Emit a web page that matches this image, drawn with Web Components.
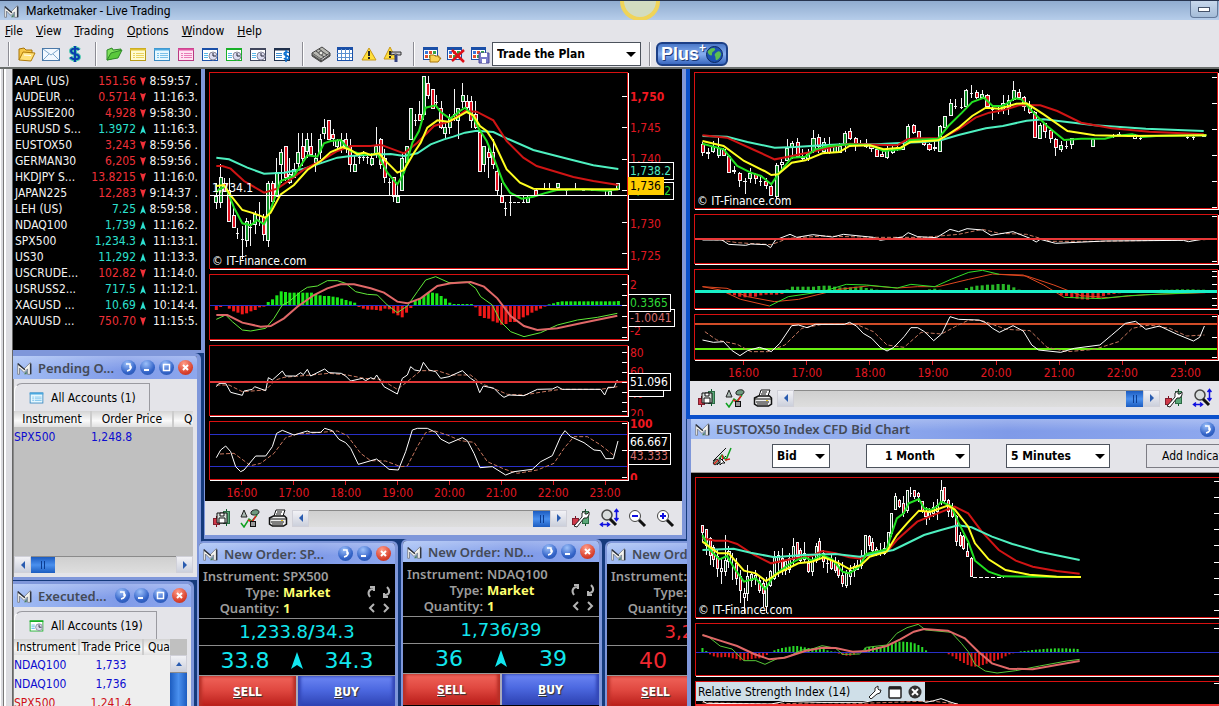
<!DOCTYPE html>
<html lang="en">
<head>
<meta charset="utf-8">
<title>Marketmaker - Live Trading</title>
<style>
	:root {
		--ui: "DejaVu Sans Condensed", "DejaVu Sans", sans-serif;
		--chrome: #e4e4e9;
		--edge: #7f97da;
		--red: #e01822;
		--cyan: #2ce0d0;
	}
	html, body { height: 100%; }
	body {
		margin: 0;
		overflow: hidden;
		font: 12px/16px var(--ui);
		color: #000;
	}
</style>
</head>
<body>
<mm-app></mm-app>

<script>
/* ============================================================
   Shared bits
   ============================================================ */

const RESET = `
	*, *::before, *::after { box-sizing: border-box; }
	button, select { font: inherit; color: inherit; margin: 0; padding: 0; border: 0; background: none; border-radius: 0; }
	svg { display: block; }
`;

function shadow(el, css, html) {
	const root = el.attachShadow({ mode: "open" });
	root.innerHTML = `<style>${RESET}${css}</style>${html}`;
	return root;
}

/* ============================================================
   <mm-icon name="..."> : 20x20 toolbar icons
   ============================================================ */

const sheet = (line, head, fill) => `
	<rect x="2.5" y="4.5" width="15" height="12" fill="${fill}" stroke="${line}"/>
	<path d="M2 5.5h16" stroke="${head}" stroke-width="2"/>
	<path d="M5 9.5h2M8 9.5h8M5 11.5h2M8 11.5h8M5 13.5h2M8 13.5h8" stroke="${head}" opacity=".7"/>`;
const clockSheet = (c) => `
	<rect x="2.5" y="4.5" width="15" height="12" fill="#fff" stroke="${c}"/>
	<path d="M2 5h16" stroke="${c}" stroke-width="2"/>
	<path d="M4 9.5h4M4 11.5h4M4 13.5h4" stroke="#5bb8e8"/>
	<circle cx="13" cy="12" r="4" fill="#dcdcf0" stroke="#889"/><path d="M13 9v3h3" fill="none" stroke="#223"/>`;
const layoutGrid = `
	<rect x="1.5" y="3.5" width="14" height="12" fill="#fff" stroke="#1a4fa8"/>
	<path d="M1 4.5h15" stroke="#1a4fa8" stroke-width="3"/>
	<path d="M3 7h3v3h-3zM11 11h3v3h-3z" fill="#3a78d8"/><path d="M7 7h3v3h-3zM3 11h3v3h-3z" fill="#e05030"/><path d="M11 7h3v3h-3zM7 11h3v3h-3z" fill="#38a048"/>`;
const candles = `
	<path d="M14.5 1v17" stroke="#0a5a2a"/><rect x="11.5" y="3.5" width="6" height="12" fill="#5aa878" stroke="#2c6a44"/>
	<path d="M4.5 8v11" stroke="#7a1020"/><rect x="1.5" y="10.5" width="6" height="6" fill="#d03848" stroke="#802030"/>`;

const ICONS = {
	logo: `<path d="M3 17V6l7 5 7-7v13h-3v-6l-4 4-5-5v7z" fill="#f3f3ee" stroke="#7a808c"/><path d="M3 5l8 7M17.500 5v12" stroke="#2b2f38" stroke-width="1.500" fill="none"/><path d="M10 17l3-4v4z" fill="#4d7d55"/>`,
	open: `<path d="M2 16V5l5-1 2 2h6v3" fill="#f7c94a" stroke="#a87408"/><path d="M2 16l4-8 12 1-4 8z" fill="#ffe27a" stroke="#b07a08"/><path d="M7 11l7 .5" stroke="#fff"/>`,
	mail: `<rect x="1.5" y="4.5" width="17" height="12" fill="#f2f8ff" stroke="#4a78a8"/><path d="M2 5l8 6 8-6M2 16l6-6M18 16l-6-6" fill="none" stroke="#7fa8cc"/>`,
	dollar: `<path d="M10 2v16M14 6c-1-2-8-2-8 1 0 4 8 2 8 6 0 3-7 3-8.5 0" fill="none" stroke="#50c8b0" stroke-width="4"/><path d="M10 2v16M14 6c-1-2-8-2-8 1 0 4 8 2 8 6 0 3-7 3-8.5 0" fill="none" stroke="#0a3fae" stroke-width="2"/>`,
	leaf: `<path d="M3 16V6l5-2 1 2 8-1-3 8z" fill="#7fe05c" stroke="#2f8a28"/><path d="M3 16l4-7 11-3-4 8z" fill="#5ac83c" stroke="#2f8a28"/>`,
	yellow: sheet("#b89b18", "#e0c030", "#fffbd0"),
	blue: sheet("#3888c0", "#4aa8e0", "#e6f8ff"),
	pink: sheet("#b83880", "#e050a0", "#ffe4f2"),
	clockBlue: clockSheet("#1a4fa8"),
	clockGreen: clockSheet("#18b028"),
	clockGrey: clockSheet("#40465c"),
	sheetDollar: `<rect x="2.5" y="4.5" width="15" height="12" fill="#fff" stroke="#20304c"/><path d="M2 5.5h16" stroke="#20304c" stroke-width="2"/><path d="M4 9.5h6M4 11.5h6M4 13.5h6" stroke="#4090d0"/><path d="M14 6v12M17 9c-1-2-5-1-5 1 0 2 5 1 5 4 0 2-4 2-5 0" fill="none" stroke="#0a70d0" stroke-width="1.5"/>`,
	cash: `<path d="M1 9l10-6 8 6-9 6z" fill="#b8b8b2" stroke="#444"/><path d="M1 9v3l9 6v-3M10 18l9-6v-3" fill="#8c8c88" stroke="#444"/><path d="M1 11l9 6 9-6M5 7l8 6M8 5l8 6" fill="none" stroke="#444"/><circle cx="10" cy="9" r="2" fill="#e8e8e2" stroke="#555"/>`,
	table: `<rect x="2.5" y="3.5" width="15" height="13" fill="#fff" stroke="#1a4fa8"/><path d="M2 4.5h16" stroke="#1a4fa8" stroke-width="3"/><path d="M2 9.5h15M2 13.5h15M6.5 5v11M10.5 5v11M14.5 5v11" stroke="#5a90d0"/>`,
	warn: `<path d="M10 4l7 12H3z" fill="#ffdf3a" stroke="#c8981a"/><path d="M10 7v5M10 13v2" stroke="#222" stroke-width="2"/>`,
	warnTool: `<path d="M7 3l6 12H1z" fill="#ffdf3a" stroke="#c8981a"/><path d="M7 7v4M7 12v2" stroke="#222" stroke-width="2"/><path d="M8 8h10v3h-3l-2-1-5 1z" fill="#c8c8d0" stroke="#333"/><path d="M13 11v7" stroke="#334080" stroke-width="3"/>`,
	layoutOpen: layoutGrid + `<path d="M8 18v-7h4l1 1h4v2l2 0-3 4z" fill="#f9d255" stroke="#a87408"/>`,
	layoutDelete: layoutGrid + `<path d="M6 6l12 12M18 6L6 17" stroke="#e01018" stroke-width="2.500"/>`,
	layoutSave: layoutGrid + `<path d="M9 9h10v10H9z" fill="#7a7ac8" stroke="#4a4a9a"/><path d="M11 9h6v4h-6zM12 15h4v4h-4z" fill="#fff"/>`,
	chartSave: candles + `<path d="M5 5h10v10H5z" fill="#d8e0dc" stroke="#111"/><path d="M8 5h4v3H8zM7 10h6v5H7z" fill="#fff" stroke="#111"/>`,
	shapes: `<path d="M4 2l3 7H1z" fill="#aab8b2" stroke="#222"/><path d="M11 4c2-3 8-3 8 0s-6 4-8 2z" fill="#6f9a80" stroke="#222"/><path d="M1 15l3 4 5-8 3 2 5-6" fill="none" stroke="#10a020" stroke-width="1.5"/><path d="M8 12l4 2 4-6" fill="none" stroke="#e02020" stroke-width="1.5"/><rect x="10.5" y="13.5" width="5" height="5" fill="#999" stroke="#111"/>`,
	print: `<path d="M6 8l2-6h9l-2 6" fill="#fff" stroke="#111"/><path d="M9 4h5M8 6h5" stroke="#111"/><path d="M1.5 10l4-2h11l2 2v6l-3 2h-11l-3-2z" fill="#eee" stroke="#111" stroke-width="1.5"/><path d="M2 11h16M3 14h13M4 16h11" stroke="#111"/><path d="M13 12.5h2" stroke="#e0c020"/>`,
	chartTool: candles + `<path d="M3 18l8-9V5l3-2v3h2l2-2v3l-2 3h-3L6 19z" fill="#fff" stroke="#222"/>`,
	fit: `<circle cx="8" cy="7" r="5" fill="#d8dcdc" stroke="#444" stroke-width="1.5"/><path d="M11 11l6 6" stroke="#111" stroke-width="3"/><path d="M17.5 2v10M15.5 4l2-2.5 2 2.5M15.5 10l2 2.5 2-2.5M2 16.5h8M4 14.5l-2.5 2 2.5 2M8 14.5l2.5 2-2.5 2" fill="none" stroke="#1010e0" stroke-width="1.5"/>`,
	zoomOut: `<circle cx="8" cy="8" r="5.5" fill="#fff" stroke="#444"/><path d="M5 8h6" stroke="#1010e0" stroke-width="2"/><path d="M12 12l6 6" stroke="#111" stroke-width="3"/>`,
	zoomIn: `<circle cx="8" cy="8" r="5.5" fill="#fff" stroke="#444"/><path d="M5 8h6M8 5v6" stroke="#1010e0" stroke-width="2"/><path d="M12 12l6 6" stroke="#111" stroke-width="3"/>`,
	draw: `<path d="M1 15L14 2M5 19l9-9" stroke="#111"/><ellipse cx="4" cy="16" rx="3" ry="2" fill="#8ad0a0" stroke="#222" transform="rotate(-45 4 16)"/><path d="M7 13l3-4 4 5 5-12" fill="none" stroke="#10a020" stroke-width="1.5"/><path d="M10 9l1 4M13 14l5-1M2 18l4-4" stroke="#e02020" stroke-width="1.5"/><path d="M8 12v7l2-2h3z" fill="#fff" stroke="#111"/>`,
};

class MmIcon extends HTMLElement {
	connectedCallback() {
		if (this.shadowRoot) return;
		shadow(this, `
			:host { display: inline-block; width: 20px; height: 20px; flex: none; }
			svg { width: 100%; height: 100%; }
		`, `<svg viewBox="0 0 20 20" aria-hidden="true" fill="none">${ICONS[this.getAttribute("name")] || ""}</svg>`);
	}
}
customElements.define("mm-icon", MmIcon);

/* ============================================================
   <mm-select label="..." value="..."> : drop-down with black arrow
   ============================================================ */

class MmSelect extends HTMLElement {
	connectedCallback() {
		shadow(this, `
			:host { display: block; position: relative; flex: none; width: var(--w, 104px); height: 24px; }
			select {
				appearance: none; width: 100%; height: 100%; padding: 0 20px 0 4px;
				background: #fff; border: 1px solid #4c525c; font-weight: bold;
				text-align-last: var(--align, left);
			}
			i {
				position: absolute; right: 5px; top: 10px; pointer-events: none;
				border: 5px solid transparent; border-top-color: #000; border-bottom: 0;
			}
		`, `<select aria-label="${this.getAttribute("label")}"><option>${this.getAttribute("value")}</option></select><i></i>`);
	}
}
customElements.define("mm-select", MmSelect);

/* ============================================================
   Application frame: title, menu, toolbar
   ============================================================ */

class MmTitleBar extends HTMLElement {
	connectedCallback() {
		shadow(this, `
			:host {
				display: flex; align-items: center; gap: 6px; position: relative; overflow: hidden;
				height: 20px; padding: 0 1px 0 2px; flex: none;
				border-top: 1px solid #27344f;
				background: linear-gradient(#90acd0, #b6cdea);
			}
			h1 { flex: 1; margin: 0; font: 12px/18px Roboto, sans-serif; }
			.sun {
				position: absolute; left: 50%; top: -20px; width: 40px; height: 40px; margin-left: 10px;
				border-radius: 50%; border: 4px solid #f0d458; background: #d2dcc0;
			}
			button {
				align-self: flex-start; width: 28px; height: 17px; display: grid; place-items: center;
				border: 1px solid #63799a; border-top: 0; border-radius: 0 0 4px 4px;
				background: linear-gradient(#c8d8ec, #a4bcd8);
			}
			button i { width: 12px; height: 5px; background: #fff; border: 1px solid #44526a; }
			mm-icon { width: 18px; height: 18px; }
		`, `<mm-icon name="logo"></mm-icon><h1>Marketmaker - Live Trading</h1><span class="sun"></span>
			<button aria-label="Minimize"><i></i></button>`);
	}
}
customElements.define("mm-title-bar", MmTitleBar);

class MmMenuBar extends HTMLElement {
	connectedCallback() {
		const items = ["File", "View", "Trading", "Options", "Window", "Help"];
		shadow(this, `
			:host { display: flex; gap: 13px; height: 21px; padding: 0 5px; background: var(--chrome); flex: none; align-items: center; }
		`, items.map((t) => `<button><u>${t[0]}</u>${t.slice(1)}</button>`).join(""));
	}
}
customElements.define("mm-menu-bar", MmMenuBar);

class MmToolbar extends HTMLElement {
	connectedCallback() {
		const groups = [
			["open", "mail", "dollar"],
			["leaf", "yellow", "blue", "pink", "clockBlue", "clockGreen", "clockGrey", "sheetDollar"],
			["cash", "table", "warn", "warnTool"],
			["layoutOpen", "layoutDelete", "layoutSave"],
		];
		const html = groups.map((g) => `<hr>` + g.map((n) =>
			`<button aria-label="${n}"><mm-icon name="${n}"></mm-icon></button>`).join("")).join("");
		shadow(this, `
			:host {
				display: flex; align-items: center; height: 28px; flex: none;
				background: var(--chrome); border-bottom: 2px solid #6a6e6c;
			}
			hr { width: 2px; height: 24px; margin: 0 5px 0 8px; border: 0; border-left: 1px solid #8c8c94; border-right: 1px solid #fff; }
			button { width: 24px; height: 24px; display: grid; place-items: center; flex: none; }
			mm-select { --w: 149px; }
			.plus {
				width: 72px; border-radius: 6px; border: 2px solid #1c3f86; display: flex; align-items: center; justify-content: center;
				background: linear-gradient(#4a78c8, #86aef0 50%, #3a68c0);
				font: bold 18px/20px "Liberation Sans", sans-serif; color: #fff; text-shadow: 1px 1px 0 #1c3a78;
			}
			.plus sup { font-size: 12px; line-height: 8px; align-self: flex-start; }
		`, `${html}<mm-select label="Layout" value="Trade the Plan"></mm-select><hr>
			<button class="plus">Plus<sup>+</sup>
				<svg width="17" height="17" viewBox="0 0 17 17"><circle cx="8.500" cy="8.500" r="8" fill="#1c50b0" stroke="#0c2860"/>
				<path d="M4 3c3-2 6-1 5 1s-3 1-3 4-3 1-4-1 1-3 2-4zM11 6c2-2 4 0 4 2s-2 5-4 6-1-3-2-4 0-3 2-4z" fill="#5cc050"/></svg></button>`);
	}
}
customElements.define("mm-toolbar", MmToolbar);

/* ============================================================
   <mm-scroll> : scrollbar, horizontal unless [vertical]
   --at is the free share of track before the thumb
   ============================================================ */

class MmScroll extends HTMLElement {
	connectedCallback() {
		const v = this.hasAttribute("vertical");
		const arrow = (d) => `<button aria-label="Scroll"><svg width="8" height="8" viewBox="0 0 8 8"><path d="${d}" fill="#2a5cb0"/></svg></button>`;
		shadow(this, `
			:host { display: flex; flex-direction: ${v ? "column" : "row"}; flex: none; height: 17px; background: #d8d8d8; }
			:host([vertical]) { width: 17px; height: auto; }
			button { width: 17px; height: 17px; flex: none; display: grid; place-items: center; background: linear-gradient(#f2f2f6, #ccd0dc); border: 1px solid #d0d0d8; }
			.track { flex: 1; display: flex; flex-direction: inherit; border: 0 solid #8a8a8a; border-top-width: 1px; background: linear-gradient(#cfcfcf, #dedede); }
			.before { flex: var(--at, 1) 0 0px; }
			.after { flex: calc(1 - var(--at, 1)) 0 0px; }
			.thumb { flex: 0 0 var(--thumb, 17px); display: grid; place-items: center; background: linear-gradient(${v ? "90deg," : ""}#1c5cc0, #4a90ee 50%, #1c5cc0); }
			.thumb i { width: 4px; height: 8px; border: 0 solid #0c3c90; border-width: 0 1px; }
		`, `${arrow(v ? "M4 2l3 4H1z" : "M6 0v8L2 4z")}
			<div class="track"><span class="before"></span><span class="thumb"><i></i></span><span class="after"></span></div>
			${arrow(v ? "M4 6l3-4H1z" : "M2 0v8l4-4z")}`);
	}
}
customElements.define("mm-scroll", MmScroll);

/* ============================================================
   <mm-window heading="..." controls="detach min max close">
   A free window on the desktop. Placed with --x / --y.
   ============================================================ */

const CONTROLS = {
	detach: `<path d="M5 4h4v4M9 5c2 2 1 5-3 6" fill="none" stroke="#fff" stroke-width="1.5"/>`,
	min: `<path d="M4 10h5" stroke="#fff" stroke-width="2"/>`,
	max: `<rect x="4.5" y="4.5" width="6" height="6" fill="none" stroke="#fff" stroke-width="1.5"/>`,
	close: `<path d="M5 5l5 5M10 5l-5 5" stroke="#fff" stroke-width="2"/>`,
};

class MmWindow extends HTMLElement {
	connectedCallback() {
		const heading = this.getAttribute("heading");
		const controls = (this.getAttribute("controls") || "").split(" ").filter(Boolean);
		const bar = heading ? `<header><mm-icon name="logo"></mm-icon><h2>${heading}</h2>${controls.map((c) =>
			`<button class="${c}" aria-label="${c}"><svg width="15" height="15" viewBox="0 0 15 15">${CONTROLS[c]}</svg></button>`).join("")}</header>` : "";
		shadow(this, `
			:host {
				position: absolute; left: var(--x); top: var(--y);
				display: flex; flex-direction: column; overflow: hidden;
				border: 0 solid var(--edge); background: #000;
			}
			header {
				display: flex; align-items: center; gap: 4px; flex: none;
				height: var(--bar, 23px); padding: 0 4px 0 2px;
				background: linear-gradient(rgba(255,255,255,.25), transparent 60%), linear-gradient(90deg, #a2bdf4, #7f9ae8 60%, #8ea8ee);
			}
			h2 {
				flex: 1; min-width: 0; margin: 0 0 0 1px; overflow: hidden; white-space: nowrap;
				font: 600 13px/20px "Noto Sans", sans-serif; color: #444a56;
			}
			mm-icon { width: 18px; height: 18px; }
			header button {
				width: 15px; height: 15px; flex: none; border-radius: 50%;
				background: radial-gradient(circle at 40% 25%, #9cc0fa, #3464c8 60%, #2450a8);
			}
			header .close { background: radial-gradient(circle at 40% 25%, #ff9c88, #d8402c 65%, #b02c20); }
		`, `${bar}<slot></slot>`);
	}
}
customElements.define("mm-window", MmWindow);

/* ============================================================
   <mm-quotes> : price watch list
   ============================================================ */

const QUOTES = [
	["AAPL (US)", "151.56", -1, "8:59:57 ."],
	["AUDEUR ...", "0.5714", -1, "11:16:3."],
	["AUSSIE200", "4,928", -1, "9:58:30 ."],
	["EURUSD S...", "1.3972", 1, "11:16:3."],
	["EUSTOX50", "3,243", -1, "8:59:56 ."],
	["GERMAN30", "6,205", -1, "8:59:56 ."],
	["HKDJPY S...", "13.8215", -1, "11:16:0."],
	["JAPAN225", "12,283", -1, "9:14:37 ."],
	["LEH (US)", "7.25", 1, "8:59:58 ."],
	["NDAQ100", "1,739", 1, "11:16:2."],
	["SPX500", "1,234.3", 1, "11:13:1."],
	["US30", "11,292", 1, "11:13:3."],
	["USCRUDE...", "102.82", -1, "11:14:0."],
	["USRUSS2...", "717.5", 1, "11:12:1."],
	["XAGUSD ...", "10.69", 1, "10:14:4."],
	["XAUUSD ...", "750.70", -1, "11:15:5."],
];

class MmQuotes extends HTMLElement {
	connectedCallback() {
		const rows = QUOTES.map(([name, price, dir, time]) => `<tr class="${dir > 0 ? "up" : "down"}">
			<th scope="row">${name}</th><td class="price">${price}</td>
			<td><svg width="6" height="9" viewBox="0 0 6 9"><path d="${dir > 0 ? "M3 0l3 9-3-2-3 2z" : "M0 0l3 1 3-1-3 9z"}" fill="currentColor"/></svg></td>
			<td class="time">${time}</td></tr>`).join("");
		shadow(this, `
			:host { display: block; flex: 1; padding: 4px 3px 0 2px; background: #000; color: #f4f4f4; }
			table { width: 100%; table-layout: fixed; border-collapse: collapse; }
			th, td { padding: 0; height: 16px; line-height: 16px; font-weight: normal; text-align: left; white-space: nowrap; }
			col.name { width: 68px; }
			col.price { width: 53px; }
			col.dir { width: 11px; }
			.price, .time { text-align: right; }
			.up { color: var(--cyan); }
			.down { color: #f03038; }
			th, .time { color: #f4f4f4; }
			svg { margin: 0 auto 0 4px; }
		`, `<table aria-label="Quotes"><colgroup><col class="name"><col class="price"><col class="dir"><col></colgroup>${rows}</table>`);
	}
}
customElements.define("mm-quotes", MmQuotes);

/* ============================================================
   <mm-orders list="pending|executed"> : tab and order table
   ============================================================ */

const ORDERS = {
	pending: {
		tab: "All Accounts (1)", icon: "blue", cols: [77, 82, 60],
		head: ["Instrument", "Order Price", "Q"],
		rows: [["buy", "SPX500", "1,248.8"]],
	},
	executed: {
		tab: "All Accounts (19)", icon: "clockGreen", cols: [65, 64, 60],
		head: ["Instrument", "Trade Price", "Qua"],
		rows: [["buy", "NDAQ100", "1,733"], ["buy", "NDAQ100", "1,736"], ["sell", "SPX500", "1,241.4"]],
	},
};

class MmOrders extends HTMLElement {
	connectedCallback() {
		const list = this.getAttribute("list");
		const o = ORDERS[list];
		shadow(this, `
			:host { display: flex; flex-direction: column; flex: 1; min-height: 0; padding-right: 4px; background: var(--chrome); border-left: 1px solid #888; }
			.tab {
				align-self: flex-start; flex: none; display: flex; align-items: center; gap: 6px;
				height: 28px; margin-top: 4px; padding: 0 13px;
				border: 1px solid #9a9aa0; border-bottom: 0; border-left-color: #fff; border-radius: 8px 0 0 0;
			}
			.tab mm-icon { width: 17px; height: 17px; }
			.body { flex: 1; display: flex; min-height: 0; background: #c0c0c0; overflow: hidden; }
			.view { flex: 1; min-width: 0; overflow: hidden; }
			table { table-layout: fixed; border-collapse: collapse; width: ${o.cols.reduce((a, b) => a + b)}px; }
			th { height: 16px; padding: 0; font-weight: normal; background: linear-gradient(#d4d4d4, #fafafa 60%, #e0e0e0); border-right: 2px solid #ccc; white-space: nowrap; }
			th:last-child { text-align: left; padding-left: ${list === "pending" ? 10 : 4}px; }
			td { padding: 0; height: 19px; }
			.executed td + td { text-align: center; }
			.buy { color: #0c0cd0; }
			.sell { color: #d01018; }
			.executed { background: #eee; }
			.foot { flex: none; margin-bottom: 4px; --thumb: 24px; --at: 0; }
			.side { --thumb: 90px; --at: 0; margin-top: 16px; }
		`, `
			<button class="tab"><mm-icon name="${o.icon}"></mm-icon>${o.tab}</button>
			<div class="body">
				<div class="view ${list}"><table>
					<colgroup>${o.cols.map((w) => `<col style="width:${w}px">`).join("")}</colgroup>
					<tr>${o.head.map((h) => `<th scope="col">${h}</th>`).join("")}</tr>
					${o.rows.map(([side, name, price]) => `<tr class="${side}"><td>${name}</td><td>${price}</td><td></td></tr>`).join("")}
				</table></div>
				${list === "executed" ? `<mm-scroll class="side" vertical></mm-scroll>` : ""}
			</div>
			${list === "pending" ? `<mm-scroll class="foot"></mm-scroll>` : ""}`);
	}
}
customElements.define("mm-orders", MmOrders);

/* ============================================================
   <mm-ticket> : order ticket
   ============================================================ */

class MmTicket extends HTMLElement {
	connectedCallback() {
		const at = (n) => this.getAttribute(n) || "";
		const [whole, tick] = at("price").split("/");
		shadow(this, `
			:host { display: block; background: #000; --tone: #12e6ee; }
			:host([falling]) { --tone: #f02830; }
			.info { display: flex; padding: 4px 2px 2px; height: 54px; color: #9c9c9c; }
			dl { flex: 1; margin: 0; display: grid; grid-template-columns: 78px 1fr; column-gap: 4px; grid-auto-rows: 16px; font: 600 13px/16px "Noto Sans", sans-serif; white-space: nowrap; }
			dt { text-align: right; }
			dd { margin: 0; }
			dd.set { color: #ffff70; font-weight: bold; }
			.steps { display: grid; grid-template: 16px 16px / 14px 14px; align-self: end; }
			.steps button { display: grid; place-items: center; }
			.price, .legs { border-top: 1px solid #8c8c8c; color: var(--tone); display: grid; align-items: center; font-family: "DejaVu Sans", sans-serif; }
			.price { height: 27px; font-size: 18px; text-align: center; }
			.legs { height: 30px; grid-template-columns: 1fr 12px 1fr; font-size: 22px; line-height: 28px; text-align: center; }
			.deal { display: grid; grid-template-columns: 1fr 1fr; gap: 2px; border-top: 1px solid #999; background: #aab; }
			.deal button { height: 31px; color: #fff; font-weight: bold; text-shadow: 1px 1px 1px #333; }
			.sell { background: linear-gradient(#f0645a, #e04840 45%, #b81c18); box-shadow: inset 3px 0 3px #b83028, inset -3px 0 3px #b83028; }
			.buy { background: linear-gradient(#6c86f4, #4c68e0 45%, #2c40b0); box-shadow: inset 3px 0 3px #3448b8, inset -3px 0 3px #3448b8; }
		`, `
			<div class="info">
				<dl><dt>Instrument:</dt><dd>${at("instrument")}</dd><dt>Type:</dt><dd class="set">Market</dd><dt>Quantity:</dt><dd class="set">1</dd></dl>
				<div class="steps">${["M4 11C1 7 3 3 7 3M4 1h4v4", "M7 1C11 5 9 9 5 9M4 7v4h4", "M8 2L4 6l4 4", "M4 2l4 4-4 4"].map((d) =>
					`<button aria-label="Change"><svg width="12" height="12" viewBox="0 0 12 12"><path d="${d}" fill="none" stroke="#b4b4b4" stroke-width="2"/></svg></button>`).join("")}</div>
			</div>
			<div class="price"><span>${whole}<b>/</b>${tick}</span></div>
			<div class="legs"><span>${at("bid")}</span><svg width="12" height="17" viewBox="0 0 12 17"><path d="M6 0l6 17-6-4-6 4z" fill="currentColor"/></svg><span>${at("ask")}</span></div>
			<div class="deal"><button class="sell"><u>S</u>ELL</button><button class="buy"><u>B</u>UY</button></div>`);
	}
}
customElements.define("mm-ticket", MmTicket);

/* ============================================================
   Chart data
   ------------------------------------------------------------
   view    x, y, w, h of the panel in plot units (3 per pixel)
   candles i high top bottom low dir, separated by ";"
   lines   colour, width, points "x,y x,y", dashed
   bars    zero line, then [start, values...] above (+) / below (-)
   ============================================================ */

const G = "#22e022", Y = "#ffff20", R = "#d01414", C = "#4ef0c0", W = "#fff", P = "#e06868", D = "#c87860";

const CHARTS = {
	ndaq: {
		x0: 37, step: 12.97, body: 9, times: true,
		panels: [
			{
				height: 197, view: [18, 21, 1251, 585], mark: true,
				level: [388, "1,734.1"],
				ticks: [90, 183, 280, 373, 468, 562],
				candles: `0 350 390 410 428 g;1 293 335 410 425 g;2 335 352 375 375 r;3 335 372 467 467 r;4 420 447 485 485 r;5 485 503 503 520 w;6 480 521 521 580 w;7 455 465 523 543 g;8 462 483 483 540 w;9 435 445 475 505 g;10 408 465 465 480 w;11 445 453 505 525 r;12 345 352 523 543 g;13 345 352 405 405 r;14 275 318 390 390 g;15 250 260 295 350 g;16 240 240 335 345 r;17 275 325 350 355 g;18 290 310 335 335 g;19 200 260 293 310 g;20 200 240 278 300 r;21 200 220 255 275 g;22 200 240 265 265 r;23 262 278 290 318 g;24 205 220 260 280 g;25 160 185 203 220 g;26 163 163 220 220 r;27 190 205 218 240 r;28 220 222 240 250 g;29 200 222 243 262 g;30 200 220 240 262 r;31 220 240 295 318 r;32 270 295 315 318 g;33 262 275 275 295 w;34 255 275 275 285 w;35 262 275 275 295 w;36 262 278 295 300 g;37 183 240 262 275 g;38 215 220 295 310 r;39 250 278 335 350 r;40 335 350 350 390 w;41 335 335 390 408 r;42 350 390 408 410 g;43 262 278 372 372 g;44 240 240 290 300 g;45 127 127 220 222 g;46 145 163 163 180 w;47 105 145 163 165 r;48 31 31 145 163 g;49 30 52 88 100 r;50 70 70 127 130 r;51 87 108 108 125 w;52 105 127 185 188 r;53 165 185 203 220 g;54 145 155 185 203 g;55 68 145 145 165 w;56 125 127 163 220 g;57 50 88 105 125 g;58 88 105 125 140 r;59 90 105 163 185 r;60 105 145 185 190 r;61 200 200 317 317 r;62 240 240 295 317 g;63 240 258 275 335 r;64 220 260 295 310 r;65 310 317 373 390 r;66 350 390 408 410 r;67 408 428 428 450 w;68 390 408 408 450 w;69 408 408 408 408 w;70 408 408 408 408 w;71 390 408 408 408 w;72 390 393 408 408 g;74 370 373 388 388 r;76 350 370 370 370 w;77 350 370 370 370 w;79 352 352 365 370 g;81 370 373 373 390 w;83 350 370 370 372 w;85 372 372 372 372 w;87 372 372 372 372 w;90 372 372 372 390 w;91 373 375 388 390 g;93 350 352 370 372 g`,
				lines: [
					[C, 2, "37,275 75,280 130,305 180,323 240,320 300,308 340,295 400,275 440,270 500,266 560,264 600,270 640,262 680,235 720,220 748,212 783,200 818,194 868,198 908,217 988,252 1058,270 1108,283 1168,298 1243,309"],
					[R, 2, "37,300 55,300 80,308 120,345 180,380 220,368 260,340 300,310 350,285 400,255 440,240 500,240 530,236 600,262 640,230 690,180 740,165 783,135 818,137 868,163 908,225 958,275 998,300 1048,315 1108,333 1168,345 1243,357"],
					[G, 2, "37,380 45,370 65,362 90,425 115,472 140,478 160,462 180,475 200,430 230,345 270,330 310,268 340,272 360,232 380,225 410,222 440,255 470,264 500,266 520,262 550,320 580,355 600,320 625,230 645,195 665,125 695,118 710,138 738,158 768,135 783,125 803,145 823,185 848,225 873,285 898,350 918,380 953,398 988,392 1028,380 1058,372 1138,370 1208,374 1243,370"],
					[Y, 2, "37,360 60,357 80,388 115,432 150,442 183,455 200,440 230,385 270,357 310,312 350,285 380,258 415,243 440,252 460,265 480,260 500,267 525,262 550,290 580,320 600,312 630,260 650,230 670,185 700,163 733,167 758,155 788,138 808,148 828,180 848,195 868,225 908,310 948,350 988,368 1058,370 1243,370"],
				],
				axis: [["1,750", 95, "b"], ["1,745", 188], ["1,740", 280], ["1,730", 473], ["1,725", 566],
					["1,735.2", 370, "tag green"], ["1,738.2", 313, "tag cyan"], ["1,736", 356, "tag now"]],
			},
			{
				height: 66, view: [18, 15, 1251, 192],
				ticks: [43, 75, 107, 140, 172, 203],
				bars: [106, [0, -14, -5, 0, -10, -18, -22, -27, -24, -18, -14, -6, -4, 10, 18, 30, 42, 40, 38, 38, 38, 38, 38, 38, 34, 30, 28, 28, 26, 24, 20, 16, 12, 8, -5, -10, -13, -13, -14, -16, -10, -12, -24, -30, -36, -22, -8, 14, 20, 28, 38, 38, 36, 28, 20, 8, 4, 4, 4, 4, 4, -6, -32, -38, -40, -48, -52, -58, -56, -50, -50, -42, -36, -30, -22, -16, -10, -4, 3, 6, 10, 12, 12, 12, 12, 12, 12, 12, 12, 12, 12, 12, 12, 12, 13], "#18e818", "#f01818"],
				lines: [
					["#2830c8", 1, "18,106 1269,106"],
					["#60e838", 1, "37,148 65,135 85,155 115,180 140,183 185,175 210,145 235,105 255,95 290,65 310,52 340,48 370,32 400,32 425,40 455,65 490,73 520,75 550,105 580,128 610,108 640,65 665,30 695,20 735,38 790,36 815,55 830,80 865,105 890,155 920,185 960,200 1010,188 1060,165 1120,150 1180,142 1240,130"],
					[P, 2, "37,135 70,135 115,158 170,170 200,168 240,145 280,110 330,75 370,55 410,43 450,43 500,55 540,68 580,95 610,100 650,85 700,48 740,40 800,36 840,50 880,85 920,138 960,168 1000,180 1060,175 1130,160 1240,137"],
				],
				axis: [["2", 47], ["-2", 180], ["-1.0041", 140, "tag pink"], ["0.3365", 97, "tag green"]],
			},
			{
				height: 71, view: [18, 228, 1251, 207],
				ticks: [248, 277, 307, 337, 367, 398, 424],
				lines: [
					[D, 1, "37,345 75,345 115,365 185,360 215,330 240,322 320,315 375,310 430,315 480,325 530,328 580,358 610,335 650,302 700,302 740,315 800,315 830,340 880,360 910,373 960,375 1020,365 1070,358 1190,358 1240,350", 1],
					[W, 1, "37,350 45,340 65,340 80,367 115,376 120,363 145,358 152,350 185,362 193,323 205,330 235,303 245,318 275,318 290,308 298,314 310,298 320,318 362,297 375,308 412,310 425,318 440,333 475,325 485,332 500,323 510,327 518,315 540,350 580,372 595,325 610,315 620,290 632,300 648,303 658,277 675,300 695,305 710,325 735,320 775,302 800,325 815,335 827,368 838,348 870,355 890,375 900,382 915,375 960,377 1000,358 1045,357 1060,350 1075,358 1190,358 1202,375 1212,352 1230,352 1240,330"],
					["#e03838", 2, "18,336 1269,336"],
				],
				axis: [["80", 252], ["60", 306], ["40", 372], ["20", 428], ["", 351, "tag empty"], ["51.096", 334, "tag"]],
			},
			{
				height: 59, view: [18, 456, 1251, 171],
				ticks: [460, 541, 622],
				lines: [
					["#2830c8", 1, "18,493 1269,493"], ["#2830c8", 1, "18,590 1269,590"],
					[D, 1, "48,552 90,550 140,587 170,580 210,550 245,503 280,492 350,487 400,483 430,497 470,550 500,572 545,573 590,590 610,588 640,530 665,488 690,482 730,495 770,512 810,517 850,575 900,597 940,610 1000,600 1050,580 1080,535 1110,500 1150,500 1190,525 1228,555", 1],
					[W, 1, "37,563 50,540 65,528 80,545 95,590 110,605 120,600 155,558 185,558 205,530 218,490 235,481 270,495 310,483 320,487 350,487 362,475 385,482 405,508 425,518 440,535 463,583 518,567 555,598 583,600 605,545 625,480 640,475 670,475 695,487 710,507 735,520 775,503 790,512 810,550 828,593 865,590 905,615 930,605 985,598 1010,575 1045,557 1070,500 1083,482 1100,500 1140,518 1170,540 1190,542 1205,566 1228,566 1242,513"],
				],
				axis: [["100", 466, "b"], ["0", 622, "b"], ["43.333", 555, "tag pink"], ["66.667", 514, "tag"]],
			},
		],
	},

	spx: {
		x0: 49, step: 15.48, body: 9, times: true,
		panels: [
			{
				height: 137, view: [26, 21, 1533, 405], mark: true,
				ticks: [35, 112, 190, 268, 346, 424],
				candles: `0 228 235 258 270 r;1 245 258 263 280 w;2 225 240 255 262 g;3 215 248 268 275 g;4 245 250 268 270 r;5 268 272 318 320 r;6 300 313 317 325 r;7 318 323 343 362 r;8 335 346 346 383 w;9 305 322 337 350 g;10 320 325 337 355 r;11 330 345 345 360 w;12 335 345 358 370 r;13 350 362 388 390 r;14 292 297 390 398 g;15 275 290 295 310 w;16 220 248 283 285 g;17 225 232 245 280 g;18 215 230 272 275 r;19 250 270 278 285 g;20 250 262 278 285 g;21 192 217 255 260 g;22 205 213 240 260 r;23 215 230 255 262 g;24 212 235 258 265 r;25 235 240 260 262 g;26 230 240 258 260 g;27 195 203 232 258 g;28 187 197 218 222 r;29 213 218 232 255 r;30 222 235 235 240 w;31 220 232 240 245 g;32 235 240 248 258 r;33 243 250 270 272 r;34 255 266 270 272 r;35 240 252 273 280 g;36 240 250 258 265 g;37 235 245 250 255 g;38 232 240 250 252 g;39 175 181 225 230 g;40 175 178 200 205 r;41 195 197 218 222 r;42 218 220 235 240 r;43 230 235 250 255 r;44 225 244 248 255 r;45 178 181 255 258 g;46 150 152 185 190 g;47 100 112 148 150 g;48 100 121 121 128 w;49 95 123 123 130 w;50 68 73 120 122 g;51 57 82 82 95 w;52 72 79 94 98 r;53 72 84 95 98 g;54 84 88 122 125 r;55 120 130 130 163 w;56 120 135 135 145 w;57 87 112 130 145 g;58 88 103 125 148 g;59 45 73 100 105 g;60 70 79 95 100 r;61 90 95 122 135 r;62 105 120 140 145 r;63 135 138 213 215 r;64 170 178 216 220 g;65 170 173 195 215 r;66 190 193 218 230 r;67 215 220 243 270 r;68 225 237 250 258 g;69 225 240 240 250 w;70 215 218 235 250 g;74 218 220 240 242 g;78 203 207 210 215 w;79 198 204 207 210 w;82 205 212 217 220 w;83 210 217 217 222 w;92 208 215 215 220 w;93 205 215 215 222 w;95 203 207 210 212 w`,
				lines: [
					[C, 2, "48,210 120,212 180,228 260,245 320,243 400,238 460,235 560,235 640,230 700,228 750,222 800,207 880,187 930,180 1000,164 1050,160 1100,166 1200,178 1350,188 1520,195"],
					[R, 2, "48,208 120,215 200,252 260,280 300,272 380,255 440,240 480,233 560,236 620,238 650,220 680,217 750,217 800,190 850,155 890,140 930,133 980,117 1040,118 1090,135 1160,170 1250,187 1360,197 1520,205"],
					[G, 2, "48,233 110,250 150,300 190,320 220,330 250,355 270,325 310,275 350,272 380,250 420,240 480,235 540,238 580,255 630,250 655,223 740,218 770,180 810,140 840,108 875,95 900,120 930,120 965,97 985,100 1020,140 1060,180 1110,222 1160,218 1230,218 1260,210 1310,205 1340,213 1380,210 1528,208"],
					[Y, 2, "48,225 110,240 170,285 230,315 250,327 270,325 310,290 350,283 400,262 450,258 480,240 540,238 580,250 630,245 660,228 740,223 760,212 800,185 840,150 880,125 920,128 970,113 1000,112 1050,145 1120,195 1200,208 1300,210 1528,208"],
				],
			},
			{
				height: 50, view: [26, 447, 1533, 144],
				ticks: [452, 587],
				lines: [
					[D, 1, "48,520 100,522 150,530 250,536 300,517 400,510 550,514 700,514 800,505 870,490 920,502 1000,505 1070,526 1200,526 1525,521", 1],
					[W, 1, "48,522 105,522 125,535 175,538 190,534 235,536 248,545 262,522 305,505 325,514 372,506 430,513 462,505 550,514 570,523 635,513 652,500 680,512 735,515 775,490 800,497 825,488 870,492 895,508 960,497 1010,517 1028,528 1040,520 1085,532 1230,525 1460,523 1475,527 1525,518"],
					["#e83838", 2, "26,519 1559,519"],
				],
			},
			{
				height: 40, view: [26, 30, 1533, 114],
				ticks: [35, 50, 72, 115, 137],
				bars: [94, [5, -8, -12, -16, -18, -16, -16, -12, -10, -10, -10, -8, 6, 14, 14, 14, 14, 14, 16, 17, 17, 14, 12, 12, 12, 14, 14, 10, 8, 5, 4, 3, 0, -3, -4, -2, 0, 0, 3, 6, 8, 5, 4, 0, 0, 3, 10, 14, 17, 18, 20, 20, 22, 22, 20, 12, 5, 0, 0, 0, 0, 0, 0, 0, -12, -14, -18, -22, -24, -25, -22, -20, -14, -10, -8, -6, 0, 0, 0, 0, 0, 0, 4, 5, 5, 5, 6, 6, 6, 6, 5, 5], "#28b828", "#e02020"],
				lines: [
					["#e04820", 1, "48,80 120,85 180,110 260,125 330,118 450,88 540,77 620,84 680,80 740,80 830,58 900,42 1000,48 1080,75 1160,107 1240,113 1350,104 1525,98"],
					["#e04820", 1, "48,80 100,90 160,118 245,138"],
					["#30e028", 1, "245,138 300,110 400,95 470,73 530,75 620,84 660,73 730,80 780,57 830,37 870,31 920,43"],
					["#e04820", 1, "920,43 990,45 1050,75 1110,112"],
					["#30e028", 1, "1110,112 1220,116 1300,107 1400,102 1525,97"],
					["#18f0c8", 3, "26,95 1559,95"],
				],
			},
			{
				height: 46, view: [26, 165, 1533, 132],
				ticks: [170, 232, 293],
				lines: [
					["#d04c28", 2, "26,191 1559,191"], ["#68f010", 2, "26,267 1559,267"],
					[D, 1, "55,215 90,240 150,253 190,275 240,275 290,255 340,205 400,193 500,193 550,215 590,255 640,262 690,217 750,222 790,200 830,180 870,182 940,208 1010,212 1060,262 1120,275 1200,268 1270,245 1310,205 1360,195 1420,205 1470,228 1522,225", 1],
					[W, 1, "48,240 80,247 110,245 135,272 158,287 180,272 215,262 235,268 250,275 275,250 310,197 330,195 355,203 380,193 465,193 480,187 500,198 520,220 545,235 570,262 590,273 610,262 640,230 660,203 680,203 700,215 727,242 750,222 775,170 800,178 860,180 880,188 900,205 920,217 960,197 990,213 1015,255 1035,270 1100,277 1140,265 1215,255 1250,225 1290,190 1320,184 1350,208 1390,198 1440,222 1490,243 1508,232 1522,198"],
				],
			},
		],
	},

	eustox: {
		x0: 48, step: 11.15, body: 6, open: true,
		panels: [
			{
				height: 141, view: [29, 24, 1539, 417], mark: true,
				ticks: [35, 83, 131, 179, 226, 277, 326, 374, 421],
				candles: `0 165 165 187 215 r;1 178 178 225 255 r;2 200 205 255 285 r;3 225 232 268 292 r;4 240 258 295 320 r;5 265 295 303 343 w;6 195 272 305 318 g;7 228 245 275 295 g;8 250 265 265 330 w;9 265 280 325 345 r;10 300 318 360 400 r;11 355 370 383 430 w;12 285 320 370 392 g;13 305 312 330 350 g;14 300 315 325 345 g;15 315 330 360 370 r;16 325 340 370 410 r;17 320 350 410 430 g;18 300 305 345 352 g;19 243 260 325 330 g;20 243 255 278 320 g;21 235 265 300 315 r;22 270 275 300 315 g;23 250 265 298 310 g;24 205 228 268 285 g;25 215 218 260 265 r;26 235 240 270 278 r;27 215 250 268 280 g;28 255 280 303 310 r;29 260 270 303 318 g;30 220 228 270 280 g;31 205 215 245 268 r;32 240 250 275 295 r;33 265 280 280 310 w;34 255 270 295 300 r;35 262 280 300 310 r;36 270 285 315 325 r;37 275 315 340 350 r;38 300 310 345 353 g;39 285 300 320 345 g;40 280 288 300 320 g;41 270 285 297 300 g;42 240 260 285 297 g;43 195 195 260 265 g;44 195 198 225 240 r;45 205 218 240 250 r;46 230 238 250 258 r;47 218 240 250 258 g;48 215 235 250 255 g;49 185 188 240 245 g;50 128 130 190 200 g;51 68 80 118 120 g;52 88 92 110 115 r;53 78 100 130 140 r;54 60 62 120 130 g;55 50 70 70 82 w;56 60 62 80 88 r;57 65 70 80 95 r;58 92 95 125 130 r;59 110 125 140 165 r;60 115 128 140 150 g;61 95 112 130 140 g;62 88 105 125 150 g;63 30 62 95 105 g;64 52 53 90 100 r;65 88 92 125 140 r;66 100 115 140 145 r;67 135 140 215 228 r;68 185 195 225 230 r;69 195 200 235 240 r;70 220 245 258 262 r;71 262 265 320 322 r`,
				lines: [
					[W, 1, "845,322 935,322", 1],
					[R, 2, "48,205 85,212 120,212 150,222 200,255 250,280 320,265 370,258 400,243 440,250 480,262 515,266 550,248 595,240 620,210 680,155 740,130 790,110 830,130 870,185 920,240 970,272 1020,290 1090,303 1158,311"],
					[C, 2, "48,240 140,236 190,248 260,262 340,255 440,252 510,260 560,250 610,240 640,225 700,195 750,180 800,166 840,172 900,200 960,222 1040,245 1158,270"],
					[G, 2, "48,195 70,240 98,268 120,258 145,300 170,335 205,325 232,358 260,315 300,285 330,268 350,262 370,272 400,255 430,268 460,305 480,310 510,290 530,252 570,243 590,238 605,190 620,145 640,130 655,100 685,87 700,115 720,120 740,108 750,95 780,108 800,155 830,215 850,272 890,305 930,319 1158,321"],
					[Y, 2, "48,215 95,250 125,250 170,302 205,310 235,333 270,310 330,280 370,275 405,262 450,280 480,297 515,285 540,260 590,245 620,195 650,160 685,122 720,125 770,107 790,118 830,170 850,220 890,268 940,300 1010,314 1090,320 1162,321"],
				],
			},
			{
				height: 53, view: [29, 462, 1539, 153],
				ticks: [475],
				bars: [547, [0, 13, 4, -6, -12, -15, -15, -14, -15, -18, -20, -24, -24, -22, -20, -18, -18, -14, -8, 0, 6, 10, 13, 15, 17, 19, 19, 17, 15, 13, 12, 12, 12, 10, 6, 3, 2, -4, -8, -10, -10, -7, -3, 4, 14, 16, 16, 16, 16, 20, 24, 28, 30, 32, 32, 31, 30, 27, 22, 16, 6, 0, 0, 0, 0, 0, -6, -12, -20, -26, -32, -38, -42, -43, -42, -38, -34, -30, -26, -22, -18, -12, -6, -3, 0, 3, 4, 5, 7, 8, 9, 10, 11, 11, 12, 12, 12, 12, 11, 11, 10], "#28d828", "#e01818"],
				lines: [
					["#2830c8", 1, "29,547 1568,547"],
					["#58c838", 1, "48,495 65,500 100,528 135,537 170,572 205,572 232,583 270,565 300,560 340,540 370,537 400,527 440,535 460,553 510,552 530,532 590,525 620,490 650,473 683,463 705,480 780,487 810,520 830,545 850,583 880,603 915,609 970,602 1040,588 1120,573 1158,568"],
					[P, 2, "48,495 100,512 150,528 200,552 245,568 290,563 350,543 400,533 440,534 490,545 530,543 590,528 630,508 670,485 700,477 770,482 820,505 860,545 900,580 950,596 1020,598 1090,585 1158,573"],
				],
			},
			{
				height: 60, view: [29, 636, 1539, 174], caption: "Relative Strength Index (14)",
				ticks: [640],
				lines: [
					[D, 1, "48,698 250,702 400,698 520,700 720,693 800,702", 1],
					[W, 1, "48,692 60,700 250,702 290,694 400,697 520,697 560,690 690,690 705,697 725,693 750,686 780,697 800,703"],
					["#f03030", 2, "29,704 1568,704"],
				],
			},
		],
	},
};

/* ============================================================
   <mm-chart src="ndaq"> : stacked plot panels
   ============================================================ */

class MmChart extends HTMLElement {
	connectedCallback() {
		const chart = CHARTS[this.getAttribute("src")];
		const hours = [16, 17, 18, 19, 20, 21, 22, 23];
		shadow(this, `
			:host { display: flex; flex-direction: column; gap: 5px; flex: none; padding: 3px 0 0 4px; background: #000; color: var(--red); }
			.row { display: flex; }
			.plot { position: relative; flex: 1; min-width: 0; border: 1px solid #d81010; box-shadow: 1px 1px 0 #fff; }
			.plot.open { border-right: 0; }
			.plot > svg { width: 100%; height: 100%; }
			.mark, .level { position: absolute; left: 2px; color: #fff; }
			.mark { bottom: -1px; }
			.axis { position: relative; flex: 0 0 var(--axis, 2px); clip-path: inset(-8px 0 0 0); }
			.axis span { position: absolute; left: 1px; padding: 0 1px; line-height: 16px; margin-top: -8px; }
			.axis .b { font-weight: bold; color: #f01820; }
			.axis .tag { background: #000; color: #fff; border: 1px solid #fff; left: 0; padding: 0 2px 0 1px; }
			.axis .empty { width: 36px; height: 18px; }
			.axis .green { color: #30d838; }
			.axis .cyan { color: #50e8c0; }
			.axis .pink { color: #d87070; }
			.axis .now { background: #fc0; color: #000; border-color: #fc0; }
			.times { display: grid; grid-template-columns: repeat(8, 1fr); text-align: center; height: 21px; margin-top: -5px; padding: 0 var(--times-end) 0 var(--times-start); }
			.times span::before { content: ""; display: block; width: 1px; height: 4px; margin: 1px auto 0; background: currentColor; }
			.caption {
				position: absolute; left: 0; top: 0; display: flex; align-items: center; gap: 6px; padding: 0 3px 0 2px;
				height: 19px; background: #cfdfe8; color: #000;
			}
			.caption span { margin-right: 12px; }
			.caption button { width: 14px; height: 14px; }
		`, chart.panels.map((p) => this._panel(chart, p)).join("") +
			(chart.times ? `<div class="times">${hours.map((h) => `<span>${h}:00</span>`).join("")}</div>` : ""));
	}

	_panel(chart, p) {
		const [vx, vy, vw, vh] = p.view;
		const pct = (y) => `${(((y - vy) / vh) * 100).toFixed(1)}%`;
		const axis = (p.axis || []).map(([text, y, cls]) => `<span class="${cls || ""}" style="top:${pct(y)}">${text}</span>`).join("");
		return `<div class="row" style="height:${p.height}px">
			<div class="plot${chart.open ? " open" : ""}">
				<svg viewBox="${p.view.join(" ")}" preserveAspectRatio="none" aria-hidden="true">
					${this._bars(chart, p.bars)}${this._candles(chart, p.candles)}
					${(p.lines || []).map((l) => this._line(...l)).join("")}
					${p.level ? this._line("#fff", 1, `${vx},${p.level[0]} ${vx + vw},${p.level[0]}`) : ""}
					${(p.ticks || []).map((y) => this._line("#fff", 1, `${vx + vw - 14},${y} ${vx + vw},${y}`)).join("")}
				</svg>
				${p.level ? `<span class="level" style="top:calc(${pct(p.level[0])} - 15px)">${p.level[1]}</span>` : ""}
				${p.mark ? `<span class="mark">© IT-Finance.com</span>` : ""}
				${p.caption ? this._caption(p.caption) : ""}
			</div>
			<div class="axis">${axis}</div>
		</div>`;
	}

	_line(color, width, points, dashed) {
		const flat = /^\S+,(\S+) \S+,\1$/.test(points) ? ` shape-rendering="crispEdges"` : "";
		return `<polyline points="${points}" fill="none" stroke="${color}" stroke-width="${width}"${flat}
			vector-effect="non-scaling-stroke"${dashed ? ` stroke-dasharray="4 2"` : ""}/>`;
	}

	// wick first, then the body over it so its fill stays visible
	_candles(chart, data) {
		if (!data) return "";
		const fill = { g: chart.body < 8 ? "#0a3a10" : "#109028", r: "#e01020", w: "#000" };
		return `<g stroke="#f4f4f4" stroke-width="1" shape-rendering="crispEdges">${data.split(";").map((row) => {
			const [i, high, top, bottom, low, dir] = row.split(" ");
			const x = chart.x0 + i * chart.step;
			const b = chart.body;
			return `<path vector-effect="non-scaling-stroke" d="M${x} ${high}V${low}"/>
				<path vector-effect="non-scaling-stroke" fill="${fill[dir]}" d="M${x - b / 2} ${top}h${b}V${bottom}h${-b}z"/>`;
		}).join("")}</g>`;
	}

	_bars(chart, bars) {
		if (!bars) return "";
		const [zero, [start, ...values], up, down] = bars;
		return values.map((v, n) => {
			const x = chart.x0 + (start + n) * chart.step - chart.body / 2;
			return `<rect x="${x}" y="${v > 0 ? zero - v : zero}" width="${chart.body}" height="${Math.abs(v)}" fill="${v > 0 ? up : down}"/>`;
		}).join("");
	}

	_caption(text) {
		return `<div class="caption"><span>${text}</span>
			<button aria-label="Settings"><svg width="14" height="14" viewBox="0 0 14 14"><path d="M1 12l6-6V3l3-2v3l1 1h2l-1 3-3 1-6 5z" fill="#fff" stroke="#222"/></svg></button>
			<button aria-label="Window"><svg width="14" height="14" viewBox="0 0 14 14"><rect x="1" y="2" width="12" height="11" rx="1" fill="#fff" stroke="#222" stroke-width="1.500"/><path d="M1 3h12" stroke="#222" stroke-width="3"/></svg></button>
			<button aria-label="Close"><svg width="14" height="14" viewBox="0 0 14 14"><circle cx="7" cy="7" r="6.500" fill="#333"/><path d="M4 4l6 6M10 4l-6 6" stroke="#fff" stroke-width="2"/></svg></button></div>`;
	}
}
customElements.define("mm-chart", MmChart);

/* ============================================================
   <mm-chart-tools end="..."> : bar under a chart
   ============================================================ */

class MmChartTools extends HTMLElement {
	connectedCallback() {
		const icons = (names) => names.map((n) => `<button aria-label="${n}"><mm-icon name="${n}"></mm-icon></button>`).join("");
		shadow(this, `
			:host { display: flex; align-items: center; flex: 1; padding: 0 3px; background: var(--chrome); }
			button { width: 28px; height: 28px; flex: none; display: grid; place-items: center; }
			mm-scroll { flex: 1; }
		`, `${icons(["chartSave", "shapes", "print"])}<mm-scroll></mm-scroll>${icons(this.getAttribute("end").split(" "))}`);
	}
}
customElements.define("mm-chart-tools", MmChartTools);

/* ============================================================
   <mm-chart-options> : price, period and interval of a chart
   ============================================================ */

class MmChartOptions extends HTMLElement {
	connectedCallback() {
		shadow(this, `
			:host { display: flex; align-items: center; gap: 36px; flex: none; height: 34px; padding-left: 17px; background: var(--chrome); border-bottom: 1px solid #999; }
			button { flex: none; width: 28px; height: 24px; display: grid; place-items: center; }
			.add { width: 104px; border: 1px solid #7c7c84; }
		`, `<button aria-label="Draw"><mm-icon name="draw"></mm-icon></button>
			<mm-select label="Price" value="Bid" style="--w:58px"></mm-select>
			<mm-select label="Period" value="1 Month" style="--align:center"></mm-select>
			<mm-select label="Interval" value="5 Minutes"></mm-select>
			<button class="add">Add Indicator</button>`);
	}
}
customElements.define("mm-chart-options", MmChartOptions);

/* ============================================================
   <mm-app>
   ============================================================ */

class MmApp extends HTMLElement {
	connectedCallback() {
		shadow(this, `
			:host { display: flex; flex-direction: column; height: 100vh; overflow: hidden; }
			main { flex: 1; display: flex; min-height: 0; }
			aside { flex: 0 0 13px; background: linear-gradient(90deg, #fff 1px, #d8d8dc 1px 3px, #777 3px 4px, #fff 4px 6px, #dcdce0 6px 12px, #666 12px); }
			.desktop { position: relative; flex: 1; overflow: hidden; background: #153a7c; }
			.quotes { --x: 0; --y: 0; width: 191px; height: 284px; border-right-width: 3px; border-bottom-width: 3px; }
			.pending { --x: 0; --y: 284px; width: 188px; height: 227px; border-width: 3px 4px 3px 0; border-top-right-radius: 6px; }
			.executed { --x: 0; --y: 512px; width: 181px; bottom: 0; border-width: 3px 3px 0 0; border-top-right-radius: 6px; }
			.ndaq { --x: 191px; --y: 0; width: 482px; height: 470px; border-width: 0 4px 4px 1px; --axis: 54px; --times-start: 7px; --times-end: 51px; }
			.ticket { --bar: 21px; --y: 472px; width: 201px; bottom: 0; border-width: 2px 3px 0 2px; border-radius: 6px 6px 0 0; }
			.first { --x: 184px; }
			.second { --x: 388px; --y: 470px; }
			.third { --x: 592px; }
			.spx { --x: 673px; --y: 0; --edge: #0a50cc; right: 0; height: 350px; border-width: 0 0 4px 4px; --axis: 1px; --times-start: 18px; --times-end: 2px; }
			.eustox { --x: 674px; --y: 350px; --bar: 20px; --axis: 0px; right: 0; bottom: 0; border-left-width: 4px; }
			.eustox mm-chart { padding-top: 4px; }
		`, `
			<mm-title-bar></mm-title-bar>
			<mm-menu-bar></mm-menu-bar>
			<mm-toolbar></mm-toolbar>
			<main>
				<aside></aside>
				<div class="desktop">
					<mm-window class="quotes"><mm-quotes></mm-quotes></mm-window>
					<mm-window class="executed" heading="Executed..." controls="detach min max close"><mm-orders list="executed"></mm-orders></mm-window>
					<mm-window class="pending" heading="Pending O..." controls="detach min max close"><mm-orders list="pending"></mm-orders></mm-window>
					<mm-window class="ndaq"><mm-chart src="ndaq"></mm-chart><mm-chart-tools end="chartTool fit zoomOut zoomIn"></mm-chart-tools></mm-window>
					<mm-window class="ticket first" heading="New Order: SP..." controls="detach min close">
						<mm-ticket instrument="SPX500" price="1,233.8/34.3" bid="33.8" ask="34.3"></mm-ticket></mm-window>
					<mm-window class="ticket second" heading="New Order: ND..." controls="detach min close">
						<mm-ticket instrument="NDAQ100" price="1,736/39" bid="36" ask="39"></mm-ticket></mm-window>
					<mm-window class="ticket third" heading="New Order: EU..." controls="detach min close">
						<mm-ticket falling instrument="EUSTOX50" price="3,240/42" bid="40" ask="42"></mm-ticket></mm-window>
					<mm-window class="eustox" heading="EUSTOX50 Index CFD Bid Chart" controls="detach">
						<mm-chart-options></mm-chart-options><mm-chart src="eustox"></mm-chart></mm-window>
					<mm-window class="spx"><mm-chart src="spx"></mm-chart><mm-chart-tools end="chartTool fit"></mm-chart-tools></mm-window>
				</div>
			</main>`);
	}
}
customElements.define("mm-app", MmApp);
</script>
</body>
</html>
